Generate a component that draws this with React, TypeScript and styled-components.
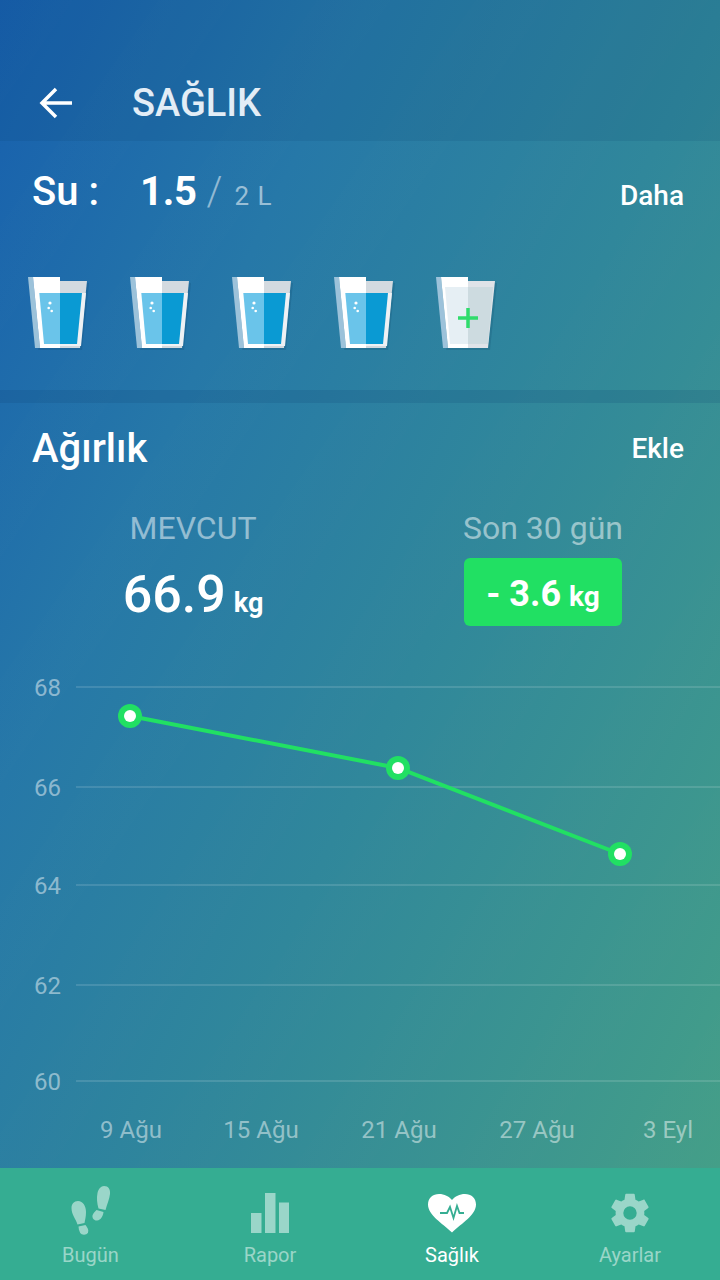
import React from "react";
import styled, { createGlobalStyle } from "styled-components";

const GlobalStyle = createGlobalStyle`
  html, body {
    margin: 0;
    padding: 0;
    background: #2a7fa0;
  }
  * {
    box-sizing: border-box;
  }
`;

const Screen = styled.div`
  width: 720px;
  height: 1280px;
  display: flex;
  flex-direction: column;
  overflow: hidden;
  font-family: Roboto, "Liberation Sans", sans-serif;
  color: #fff;
  background:
    repeating-linear-gradient(125deg, rgba(255, 255, 255, 0.005) 0 60px, rgba(255, 255, 255, 0) 60px 130px),
    linear-gradient(115deg, #175fae 0%, #2678a8 28%, #30879b 55%, #46a186 100%);
`;

const Header = styled.header`
  height: 141px;
  flex: none;
  display: flex;
  align-items: center;
  padding: 64px 0 0 38px;
  background: rgba(10, 60, 110, 0.13);
`;

const BackButton = styled.div`
  width: 36px;
  height: 36px;
  display: flex;
  align-items: center;
  margin-right: 58px;
`;

const Title = styled.h1`
  margin: 0;
  font-size: 38px;
  font-weight: 500;
  color: #e3edf6;
`;

const WaterPanel = styled.section`
  height: 249px;
  flex: none;
  padding: 27px 36px 0 32px;
`;

const PanelHead = styled.div`
  display: flex;
  align-items: baseline;
`;

const WaterLabel = styled.span`
  width: 108px;
  font-size: 40px;
  font-weight: 500;
`;

const WaterValue = styled.span`
  font-size: 40px;
  font-weight: 700;
  letter-spacing: -0.3px;
`;

const WaterSlash = styled.span`
  margin: 0 12px 0 10px;
  font-size: 40px;
  font-weight: 300;
  color: rgba(255, 255, 255, 0.5);
`;

const WaterGoal = styled.span`
  font-size: 26px;
  letter-spacing: 1px;
  color: rgba(255, 255, 255, 0.55);
`;

const HeadAction = styled.span`
  margin-left: auto;
  font-size: 28px;
  font-weight: 500;
`;

const GlassRow = styled.div`
  display: flex;
  gap: 38px;
  margin: 60px 0 0 -6px;
`;

const Divider = styled.div`
  height: 13px;
  flex: none;
  background: rgba(10, 60, 110, 0.16);
`;

const WeightPanel = styled.section`
  flex: 1;
  min-height: 0;
  display: flex;
  flex-direction: column;
  padding-top: 22px;
`;

const WeightHead = styled(PanelHead)`
  align-items: center;
  padding: 0 36px 0 32px;
`;

const WeightTitle = styled.h2`
  margin: 0;
  font-size: 40px;
  font-weight: 500;
`;

const Stats = styled.div`
  display: grid;
  grid-template-columns: 386px 158px;
  column-gap: 78px;
  margin-top: 36px;
`;

const Stat = styled.div`
  display: flex;
  flex-direction: column;
  align-items: center;
`;

const StatLabel = styled.div`
  font-size: 32px;
  line-height: 40px;
  color: rgba(255, 255, 255, 0.5);
  white-space: nowrap;
`;

const StatValue = styled.div`
  margin-top: 15px;
  font-size: 52px;
  line-height: 64px;
  font-weight: 500;
`;

const Unit = styled.span<{ $size: number }>`
  margin-left: 8px;
  font-size: ${(p) => p.$size}px;
  line-height: 1;
  font-weight: 700;
`;

const ChangeBadge = styled.div`
  width: 158px;
  height: 68px;
  margin-top: 10px;
  border-radius: 6px;
  background: #21e063;
  text-align: center;
  font-size: 36px;
  line-height: 72px;
  font-weight: 700;
`;

const Chart = styled.svg`
  display: block;
  margin-top: 33px;
  flex: none;
`;

const AxisText = styled.text`
  font-family: Roboto, "Liberation Sans", sans-serif;
  font-size: 24px;
  fill: rgba(255, 255, 255, 0.48);
`;

const TabBar = styled.nav`
  height: 112px;
  flex: none;
  display: grid;
  grid-template-columns: 181px 178px 186px 170px;
  padding-right: 5px;
  background: #35ad92;
`;

const Tab = styled.div<{ $active?: boolean }>`
  display: flex;
  flex-direction: column;
  align-items: center;
  padding-top: 15px;
  font-size: 20px;
  color: ${(p) => (p.$active ? "#fff" : "rgba(255,255,255,0.5)")};
`;

const TabIcon = styled.div`
  height: 60px;
  display: flex;
  align-items: center;
  justify-content: center;
`;

const StepsSvg = styled.svg`
  margin-bottom: 5px;
`;

// one tumbler: full of water when `filled`, otherwise empty with a plus on it
const Glass = ({ filled }: { filled: boolean }) => (
  <svg width="64" height="76" viewBox="0 0 64 76">
    <polygon points="34,6 63,8 56,75 12,75" fill="#0a3c60" opacity="0.18" />
    <polygon points="2,2 7,2 14,73 9,73" fill="#9cc2da" />
    <polygon points="7,2 34,2 34,73 14,73" fill="#fff" />
    <polygon points="34,6 61,6 54,73 34,73" fill={filled ? "#d3dae0" : "#dfe3e8"} />
    {filled ? (
      <>
        <polygon points="34,18 60,18 55,71 34,71" fill="#eef1f4" />
        <polygon points="13.300,18 34,18 34,69 18,69" fill="#6ac4ea" />
        <polygon points="34,18 56,18 51,69 34,69" fill="#0a9ad3" />
        <circle cx="24" cy="28" r="1.600" fill="#fff" />
        <circle cx="22.700" cy="33" r="1.300" fill="#fff" />
        <circle cx="25.700" cy="36" r="1.300" fill="#fff" />
      </>
    ) : (
      <>
        <polygon points="11,12 34,12 34,69 16,69" fill="#e6eff4" />
        <polygon points="34,12 59,12 54,69 34,69" fill="#cddbe0" />
        <path d="M34 33 V53 M24 43 H44" stroke="#2fdc6c" strokeWidth="3.500" fill="none" />
      </>
    )}
  </svg>
);

const gridRows = [
  { label: "68", y: 687 },
  { label: "66", y: 787 },
  { label: "64", y: 885 },
  { label: "62", y: 985 },
  { label: "60", y: 1081 },
];

const dateLabels = [
  { label: "9 Ağu", x: 131 },
  { label: "15 Ağu", x: 261 },
  { label: "21 Ağu", x: 399 },
  { label: "27 Ağu", x: 537 },
  { label: "3 Eyl", x: 668 },
];

const points = [
  { x: 130, y: 716 },
  { x: 398, y: 768 },
  { x: 620, y: 854 },
];

// svg starts at y=660 of the screen
const CHART_TOP = 660;

const WeightChart = () => (
  <Chart width="720" height="508" viewBox={`0 ${CHART_TOP} 720 508`}>
    {gridRows.map((r) => (
      <g key={r.label}>
        <line x1="76" x2="720" y1={r.y} y2={r.y} stroke="rgba(255,255,255,0.13)" strokeWidth="2" />
        <AxisText x="34" y={r.y + 9}>
          {r.label}
        </AxisText>
      </g>
    ))}
    <polyline
      points={points.map((p) => `${p.x},${p.y}`).join(" ")}
      fill="none"
      stroke="#21e063"
      strokeWidth="4"
    />
    {points.map((p) => (
      <g key={p.x}>
        <circle cx={p.x} cy={p.y} r="12" fill="#21e063" />
        <circle cx={p.x} cy={p.y} r="6" fill="#fff" />
      </g>
    ))}
    {dateLabels.map((d) => (
      <AxisText key={d.label} x={d.x} y="1138" textAnchor="middle">
        {d.label}
      </AxisText>
    ))}
  </Chart>
);

const StepsIcon = () => (
  <StepsSvg width="42" height="50" viewBox="0 0 42 50" fill="currentColor">
    <path d="M8 15 C13 15 16 20 16 26 C16 31 15 34 14.500 37 L7.500 38.500 C6 33 1.500 29 1.500 22 C1.500 18 4 15 8 15 Z" />
    <path d="M8.500 40.500 L15.500 39 C17.500 41.500 19 44 18 46.500 C16.500 49.500 11.500 49.500 10 46.500 C9 44.500 8.500 42.500 8.500 40.500 Z" />
    <path d="M34 0 C38.500 0 40.500 3.500 40 8 C39.500 13 37 18 35.500 24 L28.500 22.500 C27 17 26.500 12 27.500 7 C28.300 3 31 0 34 0 Z" />
    <path d="M26.500 24 L33.500 26 C33 30 31 34 27 34.500 C24 34.800 22 32 22.500 29.500 C23 27.500 25 25.500 26.500 24 Z" />
  </StepsSvg>
);

const BarsIcon = () => (
  <svg width="38" height="40" viewBox="0 0 38 40" fill="currentColor">
    <rect x="0" y="20" width="10.500" height="20" />
    <rect x="14" y="0" width="10.500" height="40" />
    <rect x="28" y="9.500" width="10" height="30.500" />
  </svg>
);

const HeartIcon = () => (
  <svg width="50" height="40" viewBox="0 0 50 40">
    <path
      d="M25 39.500 C15 30 1 22 1 11.500 C1 5 6 1 12 1 C17.500 1 22 3.500 25 7 C28 3.500 32.500 1 38 1 C44 1 49 5 49 11.500 C49 22 35 30 25 39.500 Z"
      fill="#fff"
    />
    <path
      d="M13 20 H20 L23 14 L26.500 25 L30 13 L32.500 20 H37"
      fill="none"
      stroke="#35ad92"
      strokeWidth="1.800"
    />
  </svg>
);

const GearIcon = () => (
  <svg width="46" height="46" viewBox="0 0 24 24" fill="currentColor">
    <path
      fillRule="evenodd"
      d="M19.400 13c.04-.32.07-.66.07-1s-.03-.68-.07-1l2.110-1.650c.19-.15.24-.42.12-.64l-2-3.460c-.12-.22-.39-.3-.61-.22l-2.490 1c-.52-.4-1.080-.73-1.690-.98l-.38-2.650A.49.49 0 0 0 14 2h-4c-.25 0-.46.18-.49.42l-.38 2.650c-.61.25-1.170.59-1.690.98l-2.490-1c-.23-.09-.49 0-.61.22l-2 3.460c-.13.22-.07.49.12.64L4.570 11c-.04.32-.07.65-.07 1s.03.68.07 1l-2.110 1.650c-.19.15-.24.42-.12.64l2 3.460c.12.22.39.3.61.22l2.490-1c.52.4 1.080.73 1.690.98l.38 2.650c.03.24.24.42.49.42h4c.25 0 .46-.18.49-.42l.38-2.650c.61-.25 1.170-.59 1.690-.98l2.490 1c.23.09.49 0 .61-.22l2-3.460c.12-.22.07-.49-.12-.64L19.400 13zM12 15.500a3.500 3.500 0 1 1 0-7 3.500 3.500 0 0 1 0 7z"
    />
  </svg>
);

const App = () => (
  <Screen>
    <GlobalStyle />
    <Header>
      <BackButton>
        <svg width="36" height="36" viewBox="0 0 36 36" fill="none" stroke="#fff" strokeWidth="3.500">
          <path d="M34 18 H4 M18 4 L4 18 L18 32" />
        </svg>
      </BackButton>
      <Title>SAĞLIK</Title>
    </Header>

    <WaterPanel>
      <PanelHead>
        <WaterLabel>Su :</WaterLabel>
        <WaterValue>1.5</WaterValue>
        <WaterSlash>/</WaterSlash>
        <WaterGoal>2 L</WaterGoal>
        <HeadAction>Daha</HeadAction>
      </PanelHead>
      <GlassRow>
        <Glass filled />
        <Glass filled />
        <Glass filled />
        <Glass filled />
        <Glass filled={false} />
      </GlassRow>
    </WaterPanel>

    <Divider />

    <WeightPanel>
      <WeightHead>
        <WeightTitle>Ağırlık</WeightTitle>
        <HeadAction>Ekle</HeadAction>
      </WeightHead>
      <Stats>
        <Stat>
          <StatLabel>MEVCUT</StatLabel>
          <StatValue>
            66.9<Unit $size={27}>kg</Unit>
          </StatValue>
        </Stat>
        <Stat>
          <StatLabel>Son 30 gün</StatLabel>
          <ChangeBadge>
            - 3.6<Unit $size={28}>kg</Unit>
          </ChangeBadge>
        </Stat>
      </Stats>
      <WeightChart />
    </WeightPanel>

    <TabBar>
      <Tab>
        <TabIcon>
          <StepsIcon />
        </TabIcon>
        <span>Bugün</span>
      </Tab>
      <Tab>
        <TabIcon>
          <BarsIcon />
        </TabIcon>
        <span>Rapor</span>
      </Tab>
      <Tab $active>
        <TabIcon>
          <HeartIcon />
        </TabIcon>
        <span>Sağlık</span>
      </Tab>
      <Tab>
        <TabIcon>
          <GearIcon />
        </TabIcon>
        <span>Ayarlar</span>
      </Tab>
    </TabBar>
  </Screen>
);

export default App;
